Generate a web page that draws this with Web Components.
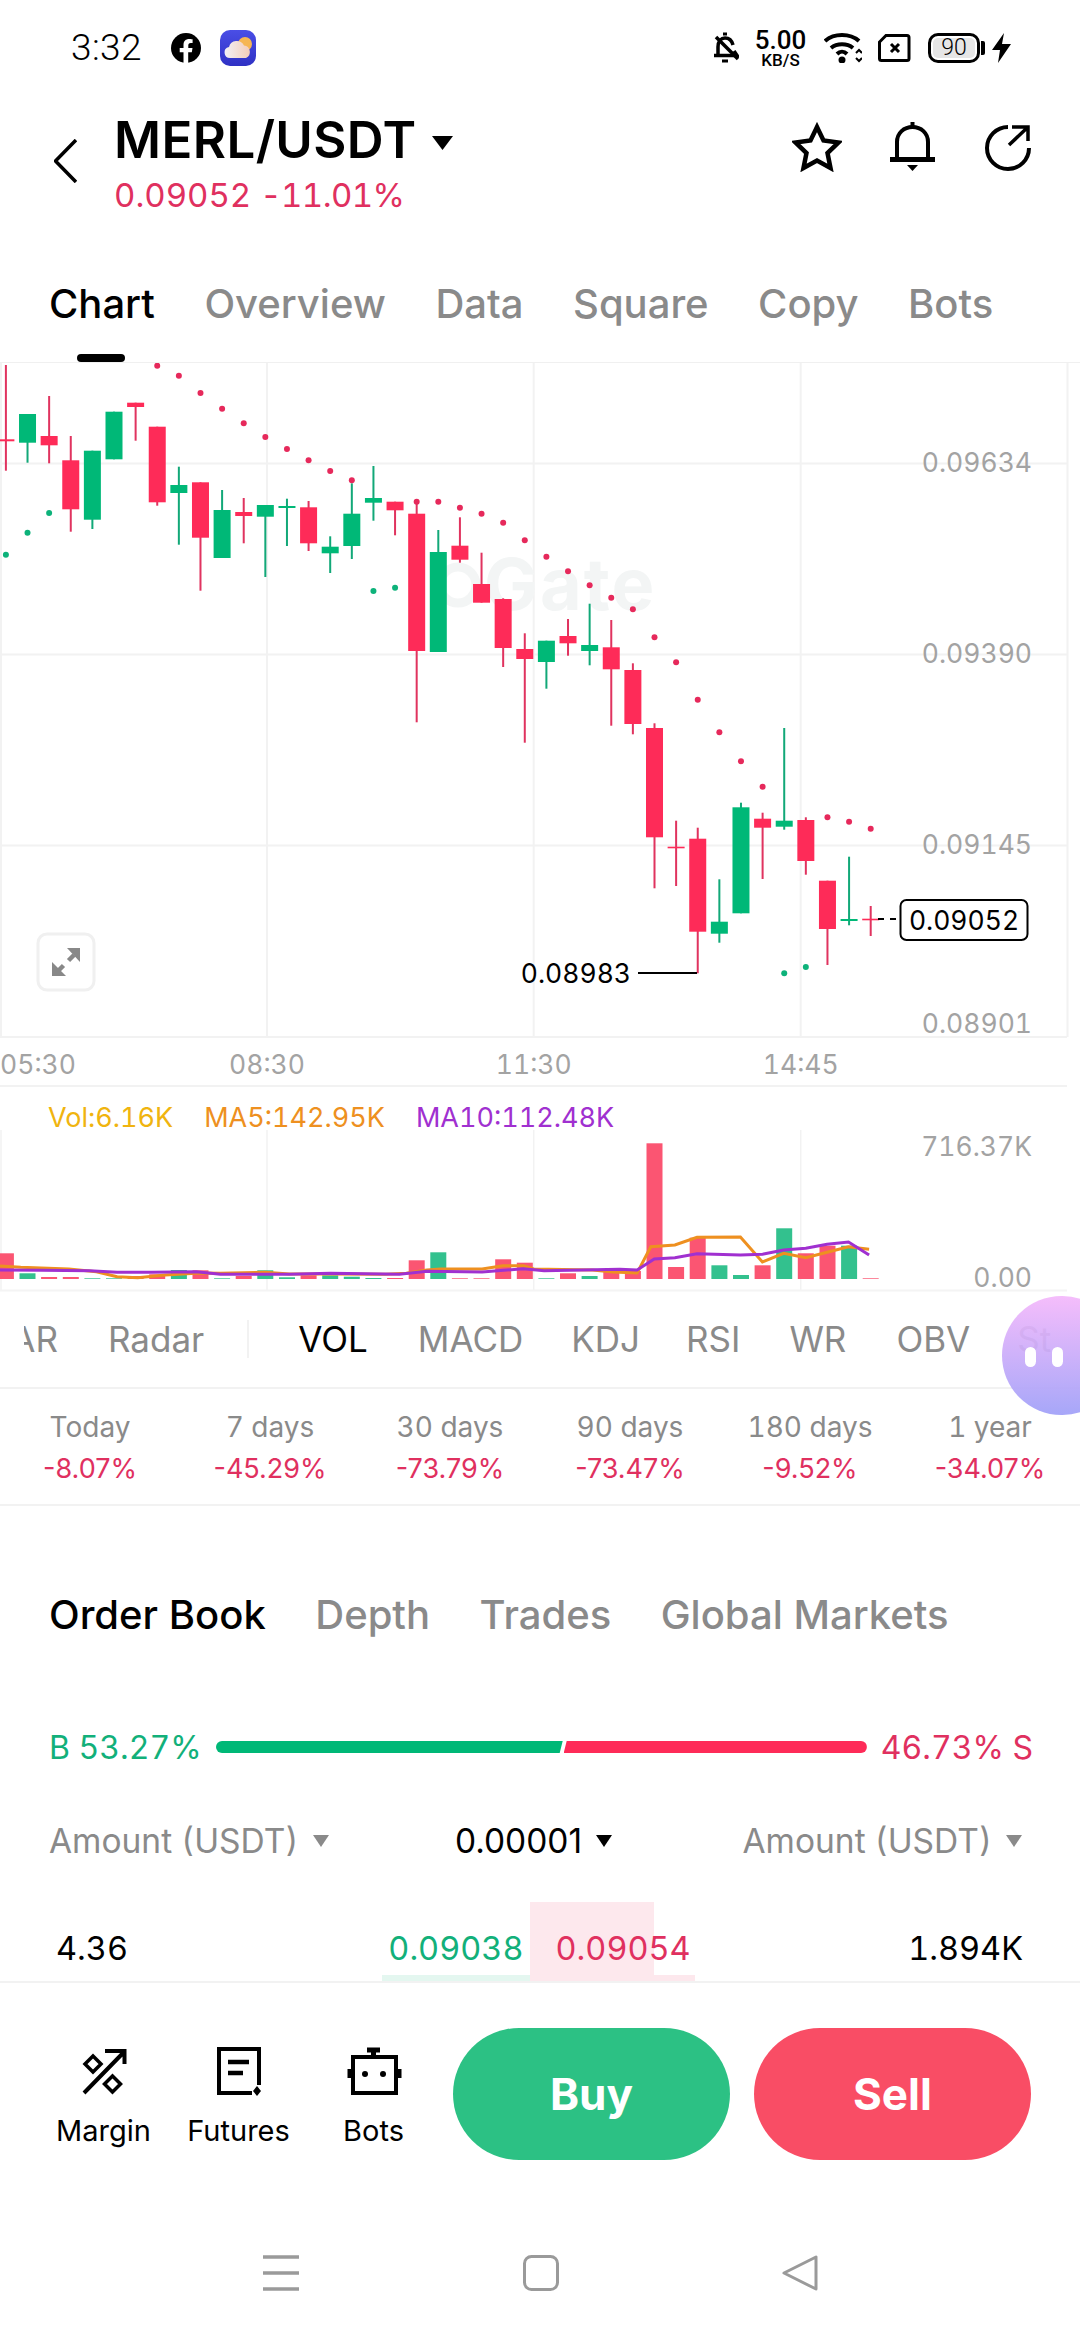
<!DOCTYPE html>
<html lang="en">
<head>
<meta charset="utf-8">
<title>MERL/USDT</title>
<style>
    html, body { margin: 0; padding: 0; background: #fff; height: 2340px; overflow: hidden; }
    body { width: 1080px; font-family: Inter, "Liberation Sans", sans-serif; font-variant-numeric: tabular-nums; color: #000; }
</style>
</head>
<body>
<status-bar></status-bar>
<pair-header></pair-header>
<tab-strip style="--tab-top:40px;--tab-size:40px;--tab-bottom:34px;--tab-line:#f0f0f0;">
    <tab-item active>Chart</tab-item>
    <tab-item>Overview</tab-item>
    <tab-item>Data</tab-item>
    <tab-item>Square</tab-item>
    <tab-item>Copy</tab-item>
    <tab-item>Bots</tab-item>
</tab-strip>
<kline-chart></kline-chart>
<volume-panel></volume-panel>
<indicator-strip></indicator-strip>
<period-row>
    <period-stat value="-8.07%">Today</period-stat>
    <period-stat value="-45.29%">7 days</period-stat>
    <period-stat value="-73.79%">30 days</period-stat>
    <period-stat value="-73.47%">90 days</period-stat>
    <period-stat value="-9.52%">180 days</period-stat>
    <period-stat value="-34.07%">1 year</period-stat>
</period-row>
<tab-strip style="--tab-top:85px;--tab-size:40px;--tab-bottom:0px;--tab-line:transparent;">
    <tab-item selected>Order Book</tab-item>
    <tab-item>Depth</tab-item>
    <tab-item>Trades</tab-item>
    <tab-item>Global Markets</tab-item>
</tab-strip>
<order-book></order-book>
<action-bar>
    <action-item label="Margin">
        <svg viewBox="74 2044 56 52" width="56" height="52" fill="none" stroke="#000" stroke-width="4">
            <path d="M82 2092L122 2051M103 2050H122.500V2063"/>
            <path d="M91 2055L99 2063L91 2071L83 2063Z" stroke-width="3.500"/>
            <path d="M110.500 2075L118.500 2083L110.500 2091L102.500 2083Z" stroke-width="3.500"/>
        </svg>
    </action-item>
    <action-item label="Futures">
        <svg viewBox="210 2044 56 52" width="56" height="52" fill="none" stroke="#000" stroke-width="4">
            <path d="M251 2092H218V2048H258V2084"/>
            <path d="M227 2061H248M227 2072H242" stroke-width="4.500"/>
            <path d="M256 2085L260 2090L256 2095L252 2090Z" fill="#000" stroke="none"/>
        </svg>
    </action-item>
    <action-item label="Bots">
        <svg viewBox="345 2044 56 52" width="56" height="52" fill="none" stroke="#000" stroke-width="4">
            <rect x="352" y="2056" width="43" height="36"/>
            <path d="M366 2049H379M372.500 2050V2056" stroke-width="5"/>
            <path d="M348.500 2068V2077M398.500 2068V2077"/>
            <circle cx="364" cy="2073" r="3" fill="#000" stroke="none"/>
            <circle cx="382" cy="2073" r="3" fill="#000" stroke="none"/>
        </svg>
    </action-item>
</action-bar>
<nav-bar></nav-bar>

<script>
(function() {
    "use strict";

    // Same green and red all over the page
    const RED = '#fe2b58', RED_WICK = '#e0335f', GREEN = '#00b877', GREEN_WICK = '#12a878';
    const GRID = '#f2f2f2', AXIS = '#a3a3a3';

    function define(name, html) {
        customElements.define(name, class extends HTMLElement {
            constructor() {
                super();
                this.attachShadow({mode: 'open'}).innerHTML = html;
            }
        });
    }

    define('status-bar', `
        <style>
            :host { display: flex; align-items: center; height: 96px; box-sizing: border-box; padding: 0 69px 0 71px; }
            .time { font: 300 37px/44px Roboto, sans-serif; width: 100px; letter-spacing: .4px; }
            svg { display: block; flex: none; }
            .right { margin-left: auto; display: flex; align-items: center; }
            .speed { width: 51px; margin: 0 18px 0 16px; display: flex; flex-direction: column; align-items: center; }
            .speed b { font: 500 26px/24px Roboto, sans-serif; }
            .speed i { font: 500 17px/16px Roboto, sans-serif; }
            .batt { width: 52px; height: 30px; box-sizing: border-box; border: 3px solid #000; border-radius: 10px; padding: 2px; margin-left: 17px; }
            .batt span { display: block; height: 100%; border-radius: 5px; background: #e6e6e6; font: 300 23px/20px Roboto, sans-serif; text-align: center; }
            .nub { width: 4px; height: 14px; background: #000; border-radius: 0 2px 2px 0; margin: 0 7px 0 1px; }
        </style>
        <div class="time">3:32</div>
        <svg width="30" height="30" viewBox="0 0 30 30"><circle cx="15" cy="15" r="15"/><path fill="#fff" d="M20.800 19.300l.7-4.300h-4.200v-2.800c0-1.200.6-2.300 2.400-2.300h1.900V6.200s-1.700-.3-3.400-.3c-3.400 0-5.700 2.100-5.700 5.800V15H8.700v4.300h3.800V30h4.700V19.300z"/></svg>
        <svg width="36" height="36" viewBox="0 0 36 36" style="margin-left:19px">
            <defs>
                <linearGradient id="wb" x1="0" y1="0" x2="0" y2="1"><stop offset="0" stop-color="#4a4ee6"/><stop offset="1" stop-color="#2f31c4"/></linearGradient>
                <linearGradient id="wc" x1="0" y1="0" x2="1" y2="0"><stop offset="0" stop-color="#f2f0f6"/><stop offset="1" stop-color="#f4cdb8"/></linearGradient>
            </defs>
            <rect width="36" height="36" rx="10" fill="url(#wb)"/>
            <circle cx="25" cy="14" r="7" fill="#f6b653"/>
            <path fill="url(#wc)" d="M10 28a5.500 5.500 0 0 1-1-10.900a8 8 0 0 1 15-1.500a6.500 6.500 0 0 1 2 12.400z"/>
        </svg>
        <div class="right">
            <svg width="26" height="32" viewBox="715 32 26 32" fill="none" stroke="#000" stroke-width="3.500">
                <path d="M720 55V47C720 41 723 38 727 38C731 38 734 41 735 45M736 51L739 55.500H716"/>
                <path d="M718 37L740 59"/>
                <path d="M725 34H729M724 61H730" stroke-width="3"/>
            </svg>
            <div class="speed"><b>5.00</b><i>KB/S</i></div>
            <svg width="38" height="30" viewBox="825 33 38 30" fill="none" stroke="#000" stroke-width="4">
                <path d="M826 41C835 33 851 33 860 41M832 48C838 43 848 43 854 48M838 54C841 51 845 51 848 54"/>
                <circle cx="843" cy="60" r="3.500" fill="#000" stroke="none"/>
                <path d="M857 53L860 50L863 53M857 58L860 61L863 58" stroke-width="2"/>
            </svg>
            <svg width="33" height="29" viewBox="879 34 33 29" fill="none" stroke="#000" stroke-width="3" style="margin-left:16px">
                <path d="M887 35.500H908A2 2 0 0 1 910 37.500V58.500A2 2 0 0 1 908 60.500H882.500A2 2 0 0 1 880.500 58.500V42Z"/>
                <path d="M892 44L900 52M900 44L892 52" stroke-width="3"/>
            </svg>
            <div class="batt"><span>90</span></div>
            <div class="nub"></div>
            <svg width="19" height="30" viewBox="992 33 19 30"><path d="M1004 33L992 50H1000L998 63L1011 44H1002Z"/></svg>
        </div>
    `);

    define('pair-header', `
        <style>
            :host { display: flex; height: 144px; box-sizing: border-box; padding: 16px 46px 0 54px; }
            svg { display: block; flex: none; }
            .back { margin: 27px 37px 0 0; }
            .title { font-size: 51px; line-height: 56px; font-weight: 600; letter-spacing: .4px; display: flex; }
            .caret { margin: 24px 0 0 15px; }
            .sub { font-size: 33px; line-height: 40px; color: #e0305f; margin-top: 7px; display: flex; gap: 9px; }
            .pct { letter-spacing: -.6px; }
            .tools { margin-left: auto; display: flex; gap: 46px; padding-top: 10px; }
        </style>
        <svg class="back" width="23" height="44" viewBox="54 139 23 44" fill="none" stroke="#000" stroke-width="3.500"><path d="M76 140L55.500 161L76 182"/></svg>
        <div>
            <div class="title"><span>MERL/USDT</span><svg class="caret" width="21" height="14" viewBox="0 0 21 14"><path d="M0 0H21L10.500 14Z"/></svg></div>
            <div class="sub"><span>0.09052</span><span class="pct">-11.01%</span></div>
        </div>
        <div class="tools">
            <svg width="50" height="50" viewBox="792 138 50 50" fill="none" stroke="#000" stroke-width="4.500"><path d="M817 143L823.500 156.500L838.500 158.500L827.500 169L830.500 184L817 176.500L803.500 184L806.500 169L795.500 158.500L810.500 156.500Z"/></svg>
            <svg width="50" height="50" viewBox="888 138 50 50" fill="none" stroke="#000" stroke-width="4"><path d="M897 175V158C897 149 904 143 912.500 143C921 143 928 149 928 158V175"/><path d="M890 175.500H935" stroke-width="5"/><path d="M912.500 137.500V143" stroke-width="4"/><path d="M907 181H918L912.500 187Z" fill="#000" stroke="none"/></svg>
            <svg width="50" height="50" viewBox="984 138 50 50" fill="none" stroke="#000" stroke-width="4"><path d="M1008 143A21 21 0 1 0 1029 164"/><path d="M1012 143H1028V157M1028 143L1009 161" stroke-width="3.500"/></svg>
        </div>
    `);

    define('tab-strip', `
        <style>
            :host { display: flex; gap: 49.500px; padding: var(--tab-top) 0 0 49px; border-bottom: 1px solid var(--tab-line); font-size: var(--tab-size); }
        </style>
        <slot></slot>
    `);

    define('tab-item', `
        <style>
            :host { display: block; position: relative; color: #8a8a8a; font-weight: 500; line-height: 48px; padding-bottom: var(--tab-bottom); }
            :host([active]), :host([selected]) { color: #000; }
            :host([active])::after { content: ""; position: absolute; left: 28px; bottom: 0; width: 48px; height: 8px; border-radius: 4px; background: #000; }
        </style>
        <slot></slot>
    `);

    // y in the data is in page pixels, the chart's viewBox starts at 363
    const CANDLES = [
        ['r',365,470.7,439.3,441.3],['g',414,462.7,414,442.7],['r',396,463.3,436,445.3],['r',436,531.7,460.3,509.3],
        ['g',450.7,529,450.7,519.7],['g',411.7,459.3,411.7,459.3],['r',402.7,440.7,402.7,407],['r',426.7,505.7,426.7,502.3],
        ['g',466.7,544.7,485,493],['r',482.3,590.7,482.3,537.7],['g',490,558,510,558],['r',498,543.3,512,516],
        ['g',505,577,505,516.7],['g',498.7,546,506,508],['r',501,551,507.3,543.3],['g',536.3,573,546.7,553.3],
        ['g',483.3,559,513.7,546],['g',466,520.7,498,502.7],['r',501.7,535.3,501.7,510.3],['r',503.3,722.3,513.7,651],
        ['g',530,652,552,652],['r',517.3,562.7,545.7,559.7],['r',552.7,602.7,584,602.7],['r',598.3,667,599,648],
        ['r',633.3,742.7,649,659],['g',640.7,688.7,640.7,662],['r',619,655.7,636,643.3],['g',603.7,665.3,645,651],
        ['r',620,725.7,647.3,669.3],['r',663.3,734.3,670,724],['r',723.3,888.3,728,837.3],['r',820.7,886,846.7,848.3],
        ['r',827.7,973.3,838.7,931.7],['g',879.3,942.7,921.7,933.7],['g',802.7,913.3,807.3,913.3],['r',812.7,879,818.7,827.7],
        ['g',728,829.7,820.7,826.7],['r',817.3,874.7,820,861],['r',880.7,965,880.7,929],['g',856.7,925.3,919,921],
        ['r',906,936,918.7,920.3]
    ];
    const SAR_RED = {7:365.7,8:375.7,9:393,10:408.7,11:423.3,12:437,13:449,14:460.3,15:471,16:480.3,19:501.7,20:501.7,21:507.7,22:513.7,23:522.7,24:540.3,25:556.7,26:571.3,27:585.3,28:597.7,29:609.3,30:637.3,31:662.3,32:699.7,33:732.3,34:761.3,35:786.7,38:817.3,39:821.7,40:828.7};
    const SAR_GREEN = {0:554.7,1:532.7,2:513,17:591,18:587.7,36:973.3,37:967};

    const cx = i => 5.9 + 21.62 * i;

    function candleMarks() {
        return CANDLES.map((c, i) => {
            const x = cx(i), col = c[0] === 'r' ? RED : GREEN, wick = c[0] === 'r' ? RED_WICK : GREEN_WICK;
            return `<rect x="${x - 1}" y="${c[1]}" width="2" height="${c[2] - c[1]}" fill="${wick}"/>` +
                `<rect x="${x - 8.5}" y="${c[3]}" width="17" height="${c[4] - c[3]}" fill="${col}"/>`;
        }).join('');
    }

    function dots(map, col) {
        return Object.keys(map).map(i => `<circle cx="${cx(+i)}" cy="${map[i]}" r="3" fill="${col}"/>`).join('');
    }

    const chartSvg = `
        <svg width="1080" height="724" viewBox="0 363 1080 724">
            <g stroke="${GRID}" stroke-width="2">
                <path d="M1 363V1037M267 363V1037M533.700 363V1037M800.700 363V1037M1067.500 363V1037"/>
                <path d="M0 463.500H1067M0 654.500H1067M0 845.500H1067M0 1037H1067M0 1086H1067"/>
            </g>
            <circle cx="458" cy="585" r="18" fill="none" stroke="#f3f5f5" stroke-width="9"/>
            <text x="484" y="610" font-size="72" font-weight="700" letter-spacing="2" fill="#f3f5f5">Gate</text>
            ${candleMarks()}
            ${dots(SAR_RED, '#e6295b')}
            ${dots(SAR_GREEN, '#0db27a')}
            <path d="M638 973H697" stroke="#000" stroke-width="2"/>
            <text x="631" y="983" text-anchor="end" font-size="26.500">0.08983</text>
            <path d="M878 919H884M890 919H896" stroke="#000" stroke-width="2"/>
            <rect x="900.500" y="900" width="127" height="40" rx="6" fill="#fff" stroke="#000" stroke-width="2"/>
            <text x="964" y="930" text-anchor="middle" font-size="26.500">0.09052</text>
            <g font-size="26.500" fill="${AXIS}">
                <g text-anchor="end">
                    <text x="1032" y="472">0.09634</text>
                    <text x="1032" y="663">0.09390</text>
                    <text x="1032" y="854">0.09145</text>
                    <text x="1032" y="1033">0.08901</text>
                </g>
                <g text-anchor="middle">
                    <text x="38" y="1074">05:30</text>
                    <text x="267" y="1074">08:30</text>
                    <text x="533.700" y="1074">11:30</text>
                    <text x="800.700" y="1074">14:45</text>
                </g>
            </g>
            <rect x="38" y="934" width="56" height="56" rx="9" fill="#fff" stroke="#f0f0f0" stroke-width="3"/>
            <g fill="#888">
                <path d="M80 948V962L67 948Z"/>
                <path d="M52 976V962L66 976Z"/>
                <path d="M74 955L68.500 960.500M63.500 965.500L58 971" stroke="#888" stroke-width="4.500"/>
            </g>
        </svg>`;

    define('kline-chart', `
        <style>
            :host { display: block; height: 724px; overflow: hidden; }
            svg { display: block; }
        </style>
        ${chartSvg}
    `);

    // zoomed volume data from the reference: index -> top of bar
    const VOL = ['r490','g550','r561','r561','g565','g565','r558','r553','g540','r541','g565','r558','g541','g562','r556','g556','g560','g564','r564','r511','g487','r565','r565','r508','r518','g565','r550','g558','r545','r543','r160','r531','r443','g526','g555','r526','g415','r490','r467','g467','r565'];
    const MA5 = [[0,528],[30,532],[100,537],[140,545],[170,560],[200,563],[240,555],[290,549],[320,550],[385,547],[420,552],[480,552],[560,553],[590,550],[620,540],[640,537],[700,537],[730,527],[760,527],[775,537],[860,540],[890,546],[925,549],[945,470],[980,465],[1012,442],[1075,441],[1107,516],[1138,490],[1170,503],[1201,487],[1232,470],[1262,478]];
    const MA10 = [[0,540],[60,541],[130,542],[170,547],[220,547],[285,545],[320,553],[420,553],[480,550],[580,553],[620,544],[700,546],[760,536],[790,542],[900,538],[925,540],[950,507],[980,503],[1012,491],[1075,495],[1107,493],[1138,480],[1170,475],[1201,463],[1232,456],[1262,495]];

    const vx = z => (z / 1.452).toFixed(1);
    const vy = z => (1090 + z / 3).toFixed(1);
    const line = pts => pts.map(p => vx(p[0]) + ',' + vy(p[1])).join(' ');

    const volBars = VOL.map((v, i) => {
        const top = 1090 + (+v.slice(1)) / 3, h = 1279 - top;
        return `<rect x="${(cx(i) - 8).toFixed(1)}" y="${top.toFixed(1)}" width="16" height="${h.toFixed(1)}" fill="${v[0] === 'r' ? '#fb5572' : '#33c18e'}"/>`;
    }).join('');

    define('volume-panel', `
        <style>
            :host { display: block; }
            .legend { display: flex; gap: 31px; height: 43px; padding: 0 0 0 48px; font-size: 27px; line-height: 62px; }
            svg { display: block; overflow: visible; }
        </style>
        <div class="legend"><span style="color:#f0b40f">Vol:6.16K</span><span style="color:#ee9020">MA5:142.95K</span><span style="color:#a030d0">MA10:112.48K</span></div>
        <svg width="1080" height="161" viewBox="0 1130 1080 161">
            <path d="M1 1130V1291M267 1130V1291M533.700 1130V1291M800.700 1130V1291" stroke="${GRID}" stroke-width="1.500"/>
            <path d="M0 1290.500H1067" stroke="#f4f4f4" stroke-width="2"/>
            ${volBars}
            <polyline points="${line(MA5)}" fill="none" stroke="#ee9020" stroke-width="3"/>
            <polyline points="${line(MA10)}" fill="none" stroke="#a030d0" stroke-width="3"/>
            <g font-size="26.500" fill="${AXIS}" text-anchor="end">
                <text x="1032" y="1156">716.37K</text>
                <text x="1032" y="1287">0.00</text>
            </g>
        </svg>
    `);

    define('indicator-strip', `
        <style>
            :host { display: block; position: relative; height: 98px; box-sizing: border-box; border-bottom: 2px solid #f2f2f2; }
            .row { display: flex; align-items: center; height: 96px; padding-left: 24px; font-size: 35px; color: #8a8a8a; overflow: hidden; }
            .row span { flex: none; }
            .cut { width: 34px; overflow: hidden; direction: rtl; }
            .rule { width: 2px; height: 38px; background: #f2f2f2; margin: 0 49px 0 43px; }
            .on { color: #000; }
            .bubble { position: absolute; left: 1002px; top: 5px; width: 120px; height: 119px; border-radius: 60px; background: linear-gradient(180deg, rgba(244,184,251,.93), rgba(160,160,248,.93)); }
            .bubble i { position: absolute; top: 51px; width: 11px; height: 20px; border-radius: 6px; background: #fff; }
        </style>
        <div class="row">
            <span class="cut">AR</span><span style="margin-left:50px">Radar</span>
            <div class="rule"></div>
            <span class="on">VOL</span><span style="margin-left:50px">MACD</span><span style="margin-left:48px">KDJ</span><span style="margin-left:46px">RSI</span><span style="margin-left:49px">WR</span><span style="margin-left:50px">OBV</span><span style="margin-left:47px">St</span>
        </div>
        <div class="bubble"><i style="left:23px"></i><i style="left:50px"></i></div>
    `);

    define('period-row', `
        <style>
            :host { display: grid; grid-template-columns: repeat(6, 180px); height: 117px; box-sizing: border-box; border-bottom: 2px solid #f2f2f2; }
        </style>
        <slot></slot>
    `);

    class PeriodStat extends HTMLElement {
        constructor() {
            super();
            this.attachShadow({mode: 'open'}).innerHTML = `
                <style>
                    :host { display: block; text-align: center; font-size: 28px; line-height: 40px; color: #8a8a8a; padding-top: 18px; }
                    .v { color: #e0305f; margin-top: 2px; font-size: 27px; font-variant-numeric: normal; }
                </style>
                <div><slot></slot></div>
                <div class="v"></div>`;
        }
        connectedCallback() {
            this.shadowRoot.querySelector('.v').textContent = this.getAttribute('value');
        }
    }
    customElements.define('period-stat', PeriodStat);

    const caret = c => `<svg width="16" height="12" viewBox="0 0 16 12" style="margin-left:14px"><path d="M0 0H16L8 12Z" fill="${c}"/></svg>`;

    define('order-book', `
        <style>
            :host { display: block; font-size: 32.500px; }
            .ratio { display: flex; align-items: center; height: 40px; margin-top: 87px; padding: 0 47px 0 49px; font-size: 32px; }
            .g { color: #12b07a; } .r { color: #e0305f; }
            .bar { flex: 1; display: flex; height: 12px; margin: 0 14px; gap: 1px; }
            .bar div { height: 12px; }
            .bar .bg { width: 53.3%; background: ${GREEN}; border-radius: 6px 0 0 6px; clip-path: polygon(0 0, 100% 0, calc(100% - 3px) 100%, 0 100%); }
            .bar .br { flex: 1; background: ${RED}; border-radius: 0 6px 6px 0; clip-path: polygon(3px 0, 100% 0, 100% 100%, 0 100%); }
            .head { display: grid; grid-template-columns: 1fr auto 1fr; align-items: center; height: 40px; margin-top: 54px; padding: 0 58px 0 49px; color: #8a8a8a; font-size: 33.500px; }
            .head div { display: flex; align-items: center; }
            .mid { color: #000; padding-right: 4px; font-variant-numeric: normal; }
            .end { justify-content: flex-end; }
            .row { position: relative; display: grid; grid-template-columns: 1fr auto 1fr; align-items: center; height: 79px; margin-top: 41px; padding: 13px 57px 0 56px; box-sizing: border-box; }
            .row span { position: relative; }
            .prices { display: flex; gap: 32px; }
            .amount { text-align: right; }
            .depth { position: absolute; }
        </style>
        <div class="ratio"><span class="g">B 53.27%</span><div class="bar"><div class="bg"></div><div class="br"></div></div><span class="r">46.73% S</span></div>
        <div class="head"><div>Amount (USDT)${caret('#8a8a8a')}</div><div class="mid">0.00001${caret('#000')}</div><div class="end">Amount (USDT)${caret('#8a8a8a')}</div></div>
        <div class="row">
            <div class="depth" style="left:382px;width:148px;bottom:0;height:6px;background:#e4f7f0"></div>
            <div class="depth" style="left:530px;width:124px;top:0;bottom:0;background:#fde8ed"></div>
            <div class="depth" style="left:654px;width:41px;bottom:0;height:6px;background:#fde8ed"></div>
            <span>4.36</span>
            <div class="prices"><span class="g">0.09038</span><span class="r">0.09054</span></div>
            <span class="amount">1.894K</span>
        </div>
    `);

    define('action-bar', `
        <style>
            :host { display: flex; height: 274px; box-sizing: border-box; border-top: 2px solid #f2f2f2; padding: 45px 49px 0 36px; }
            .btn { width: 277px; height: 132px; border-radius: 66px; color: #fff; font-size: 44px; line-height: 132px; font-weight: 700; text-align: center; }
            .buy { background: #2cc184; margin-left: 12px; }
            .sell { background: #f94d65; margin-left: 24px; }
        </style>
        <slot></slot>
        <div class="btn buy">Buy</div>
        <div class="btn sell">Sell</div>
    `);

    class ActionItem extends HTMLElement {
        constructor() {
            super();
            this.attachShadow({mode: 'open'}).innerHTML = `
                <style>
                    :host { display: block; width: 135px; text-align: center; }
                    .ico { display: flex; justify-content: center; height: 52px; margin-top: 17px; }
                    .lbl { font-size: 29px; line-height: 34px; margin-top: 17px; }
                </style>
                <div class="ico"><slot></slot></div>
                <div class="lbl"></div>`;
        }
        connectedCallback() {
            this.shadowRoot.querySelector('.lbl').textContent = this.getAttribute('label');
        }
    }
    customElements.define('action-item', ActionItem);

    define('nav-bar', `
        <style>
            :host { display: flex; justify-content: center; gap: 223px; padding-top: 0; }
            svg { display: block; }
        </style>
        <svg width="37" height="36" viewBox="264 2256 37 36" fill="none" stroke="#9a9a9a" stroke-width="3.500"><path d="M264 2258H300M264 2274H300M264 2290H300"/></svg>
        <svg width="36" height="36" viewBox="522 2256 36 36" fill="none" stroke="#9a9a9a" stroke-width="3"><rect x="523.500" y="2257.500" width="33" height="33" rx="7"/></svg>
        <svg width="36" height="36" viewBox="779 2256 36 36" fill="none" stroke="#9a9a9a" stroke-width="3" stroke-linejoin="round"><path d="M813 2258V2290L781 2274Z"/></svg>
    `);
})();
</script>
</body>
</html>
